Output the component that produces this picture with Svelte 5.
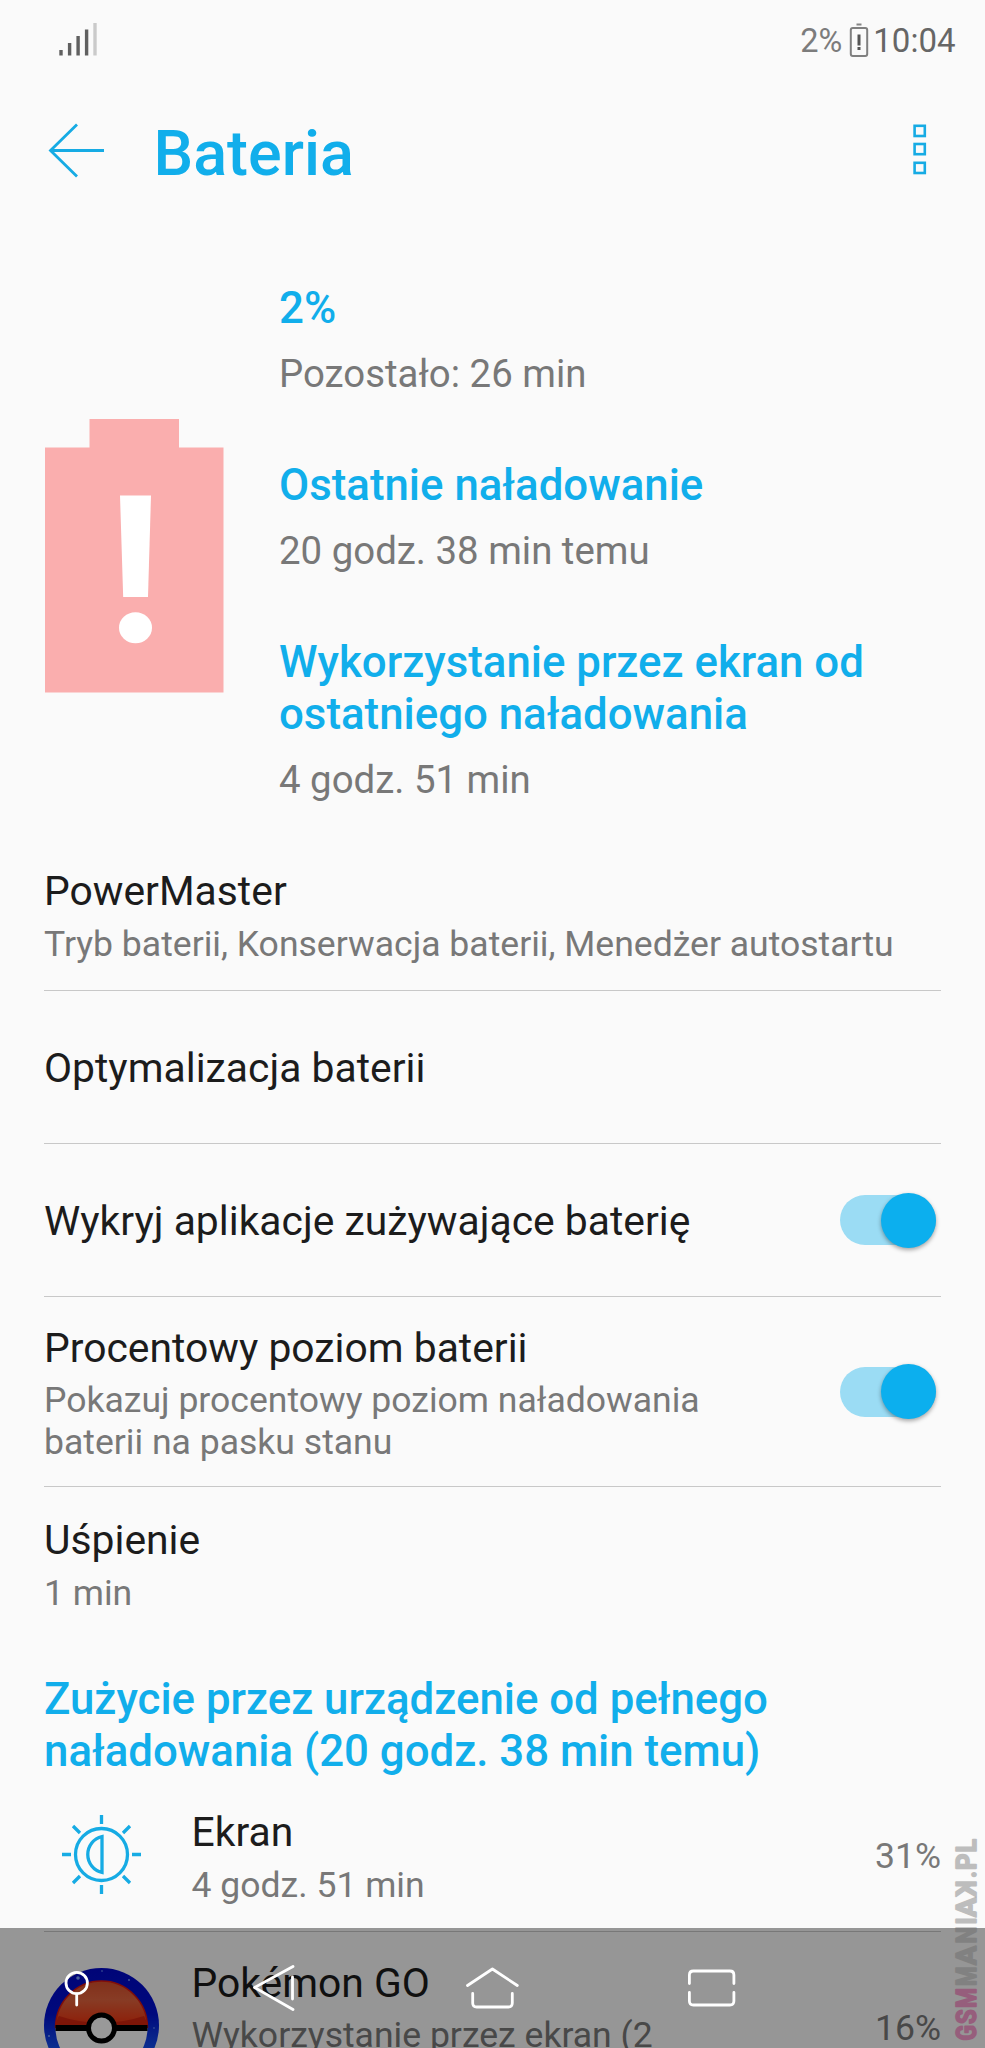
<script>
  const stats = [
    { title: '2%', value: 'Pozostało: 26 min' },
    { title: 'Ostatnie naładowanie', value: '20 godz. 38 min temu' },
    { title: 'Wykorzystanie przez ekran od ostatniego naładowania', value: '4 godz. 51 min' },
  ];
  const bars = [
    [59.3, 50],
    [67.9, 43],
    [76.4, 36],
    [84.9, 29.5],
    [93.3, 23],
  ];
  // Letters of the vertical mark: glyph, start offset and drawn width
  const mark = [
    ['G', 0.5, 15.5, true], ['S', 17, 14.5, true], ['M', 33, 20, true],
    ['M', 55, 19.5], ['A', 76, 19], ['N', 97.5, 17], ['I', 116.5, 7],
    ['A', 124, 19.5], ['K', 144.5, 16], ['.', 163, 7], ['P', 171, 16.5], ['L', 188.5, 13.5],
  ];
  let detect = $state(true);
  let percent = $state(true);
</script>

<div class="screen">
  <header class="status">
    <svg class="signal" width="110" height="70" viewBox="0 0 110 70">
      {#each bars as [x, y], i}
        <rect {x} {y} width="3.4" height={55.5 - y} fill={i === 4 ? '#cacaca' : '#606060'} />
      {/each}
    </svg>
    <div class="right">
      <span class="pct">2%</span>
      <svg width="22" height="38" viewBox="0 0 22 38">
        <path d="M8.5 3.5h5" stroke="#858585" stroke-width="2" />
        <rect x="2.8" y="7" width="16.4" height="28" rx="2" fill="none" stroke="#808080" stroke-width="2" />
        <path d="M11 13.500v11M11 26v3" stroke="#555" stroke-width="3" />
      </svg>
      <span class="time">10:04</span>
    </div>
  </header>

  <div class="appbar">
    <svg class="back" width="60" height="60" viewBox="0 0 60 60">
      <path d="M33 4.5 6.5 30.5 33 56.5M6.5 30.5H60" fill="none" stroke="#16abe4" stroke-width="2.8" />
    </svg>
    <h1>Bateria</h1>
    <svg class="more" width="14" height="52" viewBox="0 0 14 52">
      {#each [1.8, 20, 38.8] as y}
        <rect x="1.6" {y} width="10.2" height="10.2" fill="none" stroke="#16abe4" stroke-width="2.6" />
      {/each}
    </svg>
  </div>

  <section class="summary">
    <svg class="battery" width="179" height="275" viewBox="0 0 179 275">
      <path d="M0 28.5H44.5V0H134V28.5H178.500V273.500H0z" fill="#faaeae" />
      <path d="M75 76.5h31l-3 101.500H78.200z" fill="#fff" />
      <ellipse cx="90.500" cy="208.700" rx="16.500" ry="15.500" fill="#fff" />
    </svg>
    <div class="stats">
      {#each stats as s}
        <div class="stat">
          <h2>{s.title}</h2>
          <p>{s.value}</p>
        </div>
      {/each}
    </div>
  </section>

  {#snippet toggle(on)}
    <span class="track" class:on><span class="thumb"></span></span>
  {/snippet}

  <main>
    <div class="row power">
      <div><h3>PowerMaster</h3><p>Tryb baterii, Konserwacja baterii, Menedżer autostartu</p></div>
    </div>
    <div class="row single">
      <div><h3>Optymalizacja baterii</h3></div>
    </div>
    <div class="row single" role="switch" aria-checked={detect} tabindex="-1" onclick={() => (detect = !detect)} onkeydown={() => {}}>
      <div><h3>Wykryj aplikacje zużywające baterię</h3></div>
      {@render toggle(detect)}
    </div>
    <div class="row double" role="switch" aria-checked={percent} tabindex="-1" onclick={() => (percent = !percent)} onkeydown={() => {}}>
      <div class="narrow"><h3>Procentowy poziom baterii</h3><p>Pokazuj procentowy poziom naładowania baterii na pasku stanu</p></div>
      {@render toggle(percent)}
    </div>
    <div class="row sleep">
      <div><h3>Uśpienie</h3><p>1 min</p></div>
    </div>

    <h2 class="usage">Zużycie przez urządzenie od pełnego naładowania (20 godz. 38 min temu)</h2>

    <div class="row app first">
      <svg class="icon" width="115" height="115" viewBox="0 0 115 115">
        <g fill="none" stroke="#16abe4" stroke-width="3.3">
          <circle cx="57.500" cy="57.500" r="26" />
          <path d="M58 39.500A18.500 18.500 0 0 0 58 75.500z" />
          <path d="M57.500 18v9M57.500 88v9M18 57.500h9M88 57.500h9M29 29l7 7M86 29l-7 7M29 86l7-7M86 86l-7-7" />
        </g>
      </svg>
      <div class="name"><h3>Ekran</h3><p>4 godz. 51 min</p></div>
      <span class="share">31%</span>
    </div>
    <div class="row app second">
      <svg class="icon" width="115" height="115" viewBox="0 0 115 115">
        <defs>
          <linearGradient id="ring" x1="0" y1="0" x2="0" y2="1">
            <stop offset="0" stop-color="#0008c8" /><stop offset=".4" stop-color="#0010d0" /><stop offset=".7" stop-color="#1450f0" />
          </linearGradient>
          <linearGradient id="dome" x1="0" y1="0" x2="0" y2="1">
            <stop offset="0" stop-color="#d8502c" /><stop offset=".4" stop-color="#e2643e" /><stop offset="1" stop-color="#ee2c08" />
          </linearGradient>
        </defs>
        <circle cx="57.500" cy="57.500" r="57.500" fill="url(#ring)" />
        <circle cx="57.500" cy="60" r="46" fill="#fff" />
        <path d="M11.500 60a46 47 0 0 1 92 0z" fill="url(#dome)" />
        <path d="M12 57q1-7 3-9 42 14 85 0 3 5 3 9z" fill="#c81c0c" opacity=".7" />
        <path d="M11.500 60a46 47 0 0 1 92 0" fill="none" stroke="#d81810" stroke-width="1.500" />
        <path d="M11.500 60h92" stroke="#000" stroke-width="6" />
        <circle cx="57.500" cy="60" r="13" fill="#fff" stroke="#000" stroke-width="5" />
        <g fill="#7aa0ff"><circle cx="85" cy="12" r=".9" /><circle cx="34" cy="10" r="1.800" /><circle cx="58" cy="3" r=".8" /><circle cx="5" cy="68" r="1" /><circle cx="110" cy="60" r=".8" /></g>
      </svg>
      <div class="name"><h3>Pokémon GO</h3><p>Wykorzystanie przez ekran (2</p></div>
      <span class="share">16%</span>
    </div>
  </main>

  <nav>
    <svg width="985" height="120" viewBox="0 0 985 120" fill="none" stroke="#fff" stroke-width="2.800" stroke-linecap="round" stroke-linejoin="round">
      <circle cx="76.700" cy="55" r="10.700" /><path d="M76.700 66v11" />
      <path d="M293 38.500 254.500 59.500 293 81.500M292.500 49v22" />
      <path d="M467.500 57.500 492.400 41l24.900 16.500M472.700 65.500V75q0 4 4 4h31.600q4 0 4-4v-9.500" />
      <path d="M689.400 55.500V47q0-4 4-4h36.500q4 0 4 4v8.500M689.400 64.500V73q0 4 4 4h36.500q4 0 4-4v-8.500" />
    </svg>
  </nav>

  <svg class="mark" width="30" height="204" viewBox="0 0 30 204">
    <g transform="translate(24.300 202) rotate(-90)">
      {#each mark as [ch, x, w, accent]}
        <g opacity=".4" fill={accent ? '#960c57' : '#646464'} stroke={accent ? '#960c57' : '#646464'}>
          <text transform={ch === 'K' ? `translate(${x + w} 0) scale(-1 1)` : `translate(${x} 0)`} textLength={w} lengthAdjust="spacingAndGlyphs">{ch}</text>
        </g>
      {/each}
    </g>
  </svg>
</div>

<style>
  :global(body) { margin: 0; background: #fafafa; }
  .screen {
    position: relative;
    width: 985px;
    height: 2048px;
    overflow: hidden;
    background: #fafafa;
    font-family: Roboto, "Noto Sans", sans-serif;
    color: #1c1c1c;
  }
  h1, h2, h3, p { margin: 0; font-weight: 400; }
  svg { display: block; flex: none; }

  .status { display: flex; justify-content: space-between; height: 80px; }
  .right { display: flex; align-items: flex-start; padding: 21px 29.500px 0 0; }
  .right span { line-height: 40px; white-space: nowrap; }
  .pct { font-size: 32.5px; color: #7c7c7c; margin-right: 6px; }
  .time { font-size: 33px; color: #666; margin-left: 3px; }

  .appbar { display: flex; align-items: center; height: 140px; padding: 0 58px 0 44px; box-sizing: border-box; }
  .appbar h1 { font-size: 62.900px; font-weight: 500; color: #11aeeb; line-height: 72px; margin: 7px auto 0 49.500px; }

  .summary { display: flex; height: 622px; }
  .battery { margin: 198.500px 0 0 45px; }
  .stats { padding: 62px 0 0 55px; width: 620px; }
  .stat { margin-bottom: 36px; }
  h2 { font-size: 43.800px; font-weight: 500; line-height: 52px; color: #11aeeb; }
  .stat p { font-size: 38.400px; line-height: 46px; color: #787878; margin-top: 17px; padding-bottom: 26px; }

  main { padding: 0 44px; }
  .row { display: flex; box-sizing: border-box; border-bottom: 1.500px solid #c8c8c8; justify-content: space-between; }
  h3 { font-size: 40.850px; line-height: 47px; white-space: nowrap; }
  .row p { font-size: 35.550px; line-height: 42.300px; color: #787878; margin-top: 7.500px; }
  .power { height: 149px; padding-top: 26px; }
  .single { height: 153px; padding-top: 54px; }
  .double { height: 190px; padding-top: 27.500px; }
  .sleep { height: 180px; padding-top: 30px; border: 0; }
  .narrow { width: 700px; }

  .track { position: relative; width: 96px; height: 50px; margin: -3px 5px 0 0; border-radius: 25px; background: #9bdcf4; flex: none; }
  .double .track { margin-top: 42px; }
  .thumb { position: absolute; left: 0; top: -2.500px; width: 55px; height: 55px; border-radius: 50%; background: #0cafee; box-shadow: 0 2px 4px rgba(0, 0, 0, .35); }
  .on .thumb { left: 41px; }

  .usage { margin-top: 6px; height: 133px; }
  .app { height: 126px; justify-content: flex-start; }
  .first .icon { margin-top: -9px; }
  .first .name { padding-top: 3px; }
  .first .share { padding-top: 29px; }
  .second { border: 0; }
  .second .icon { margin-top: 36px; }
  .second .name { padding-top: 27.500px; }
  .second .share { padding-top: 74.500px; }
  .name { margin-left: 32.500px; flex: 1; white-space: nowrap; }
  .share { font-size: 35.550px; line-height: 42px; color: #787878; }

  nav { position: absolute; left: 0; bottom: 0; width: 985px; height: 120px; background: rgba(0, 0, 0, .4); }
  .mark { position: absolute; left: 952px; top: 1839px; overflow: visible; }
  .mark text { font: 700 27.500px Roboto, sans-serif; stroke-width: 1.700px; stroke-linejoin: round; }
</style>
